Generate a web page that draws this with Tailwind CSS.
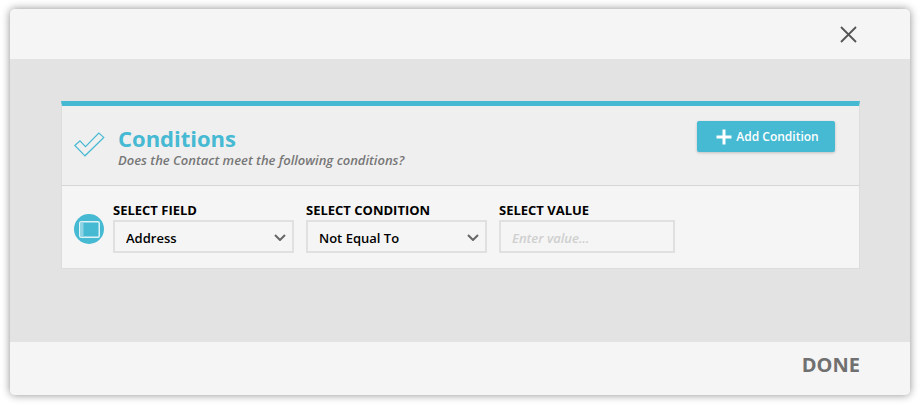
<!DOCTYPE html>
<html lang="en">
<head>
    <meta charset="UTF-8">
    <meta name="viewport" content="width=device-width, initial-scale=1.0">
    <title>Conditions</title>
    <script src="https://cdn.jsdelivr.net/npm/@tailwindcss/browser@4"></script>
</head>
<body class="bg-white w-[920px] h-[406px] overflow-hidden pt-[9px] px-[10px] font-['Open_Sans',sans-serif] antialiased">

    <div class="w-[900px] h-[386px] rounded-[5px] overflow-hidden flex flex-col bg-[#f5f5f5] shadow-[0_0_9px_rgba(0,0,0,0.45)]">

        <!-- top bar -->
        <div class="h-[50px] shrink-0 flex items-center justify-end pr-[53px] pt-[1px] bg-[#f5f5f5]">
            <svg width="17" height="17" viewBox="0 0 17 17" fill="none" stroke="#555555" stroke-width="1.8">
                <path d="M1 1 L16 16 M16 1 L1 16"/>
            </svg>
        </div>

        <!-- body -->
        <div class="flex-1 bg-[#e3e3e3] pt-[42px] px-[51px]">
            <div class="w-[799px] h-[168px] border-t-[5px] border-t-[#46b9d3] border-x border-b border-x-[#dcdcdc] border-b-[#dcdcdc] bg-[#f5f5f5]">

                <div class="h-[80px] bg-[#efefef] border-b border-[#d6d6d6] flex justify-between">
                    <div class="flex pl-[12px]">
                        <svg class="mt-[26px]" width="31" height="25" viewBox="0 0 31 25" fill="none" stroke="#46b9d3" stroke-width="1.2">
                            <path d="M0.8 13.5 L6 8.8 L11.5 14.6 L24.8 1 L29.8 5.4 L11 23.8 Z"/>
                        </svg>
                        <div class="ml-[13px] pt-[17px]">
                            <h1 class="text-[22px] leading-[30px] font-bold text-[#46b9d3]">Conditions</h1>
                            <p class="text-[13px] leading-[12px] mt-[1px] italic font-semibold text-[#777777]">Does the Contact meet the following conditions?</p>
                        </div>
                    </div>
                    <button class="mt-[15px] mr-[24px] w-[138px] h-[31px] rounded-[2px] bg-[#46b9d3] text-white text-[12px] font-semibold flex items-center justify-center gap-[4px] pl-[3px] shadow-[0_1px_3px_rgba(0,0,0,0.2)]">
                        <svg width="16" height="16" viewBox="0 0 16 16" fill="#ffffff">
                            <path d="M6.5 0.5 H9.5 V6.5 H15.5 V9.5 H9.5 V15.5 H6.5 V9.5 H0.5 V6.5 H6.5 Z"/>
                        </svg>
                        Add Condition
                    </button>
                </div>

                <div class="flex pl-[12px] pt-[16px]">
                    <div class="w-[30px] h-[30px] mt-[12px] mr-[9px] rounded-full bg-[#46b9d3] flex items-center justify-center">
                        <svg width="21" height="17" viewBox="0 0 21 17">
                            <rect x="0.75" y="0.75" width="19.5" height="15.5" rx="1.5" fill="#46b9d3" stroke="#dff3f7" stroke-width="1.5"/>
                            <rect x="1.5" y="1.5" width="3" height="14" fill="#8dd3e3"/>
                        </svg>
                    </div>

                    <div class="w-[181px] mr-[12px]">
                        <label class="block text-[13px] leading-[16px] font-bold text-black">SELECT FIELD</label>
                        <div class="relative mt-[2px]">
                            <select class="appearance-none block w-full h-[33px] pl-[11px] pt-[4px] border-2 border-[#e0e0e0] bg-[#f5f5f5] text-[13px] font-semibold text-black">
                                <option>Address</option>
                            </select>
                            <svg class="absolute right-[8px] top-[14px]" width="12" height="7" viewBox="0 0 12 7" fill="none" stroke="#666666" stroke-width="2">
                                <path d="M1 1 L6 6 L11 1"/>
                            </svg>
                        </div>
                    </div>

                    <div class="w-[181px] mr-[12px]">
                        <label class="block text-[13px] leading-[16px] font-bold text-black">SELECT CONDITION</label>
                        <div class="relative mt-[2px]">
                            <select class="appearance-none block w-full h-[33px] pl-[11px] pt-[4px] border-2 border-[#e0e0e0] bg-[#f5f5f5] text-[13px] font-semibold text-black">
                                <option>Not Equal To</option>
                            </select>
                            <svg class="absolute right-[8px] top-[14px]" width="12" height="7" viewBox="0 0 12 7" fill="none" stroke="#666666" stroke-width="2">
                                <path d="M1 1 L6 6 L11 1"/>
                            </svg>
                        </div>
                    </div>

                    <div class="w-[176px]">
                        <label class="block text-[13px] leading-[16px] font-bold text-black">SELECT VALUE</label>
                        <input type="text" placeholder="Enter value..." class="block mt-[2px] w-full h-[33px] pl-[11px] pt-[2px] border-2 border-[#e0e0e0] bg-[#f5f5f5] text-[13px] italic font-semibold placeholder:text-[#cfcfcf] outline-none">
                    </div>
                </div>
            </div>
        </div>

        <!-- footer -->
        <div class="h-[53px] shrink-0 flex items-center justify-end pr-[50px] pb-[8px] bg-[#f5f5f5]">
            <span class="text-[20px] font-bold text-[#707070]">DONE</span>
        </div>
    </div>

</body>
</html>
